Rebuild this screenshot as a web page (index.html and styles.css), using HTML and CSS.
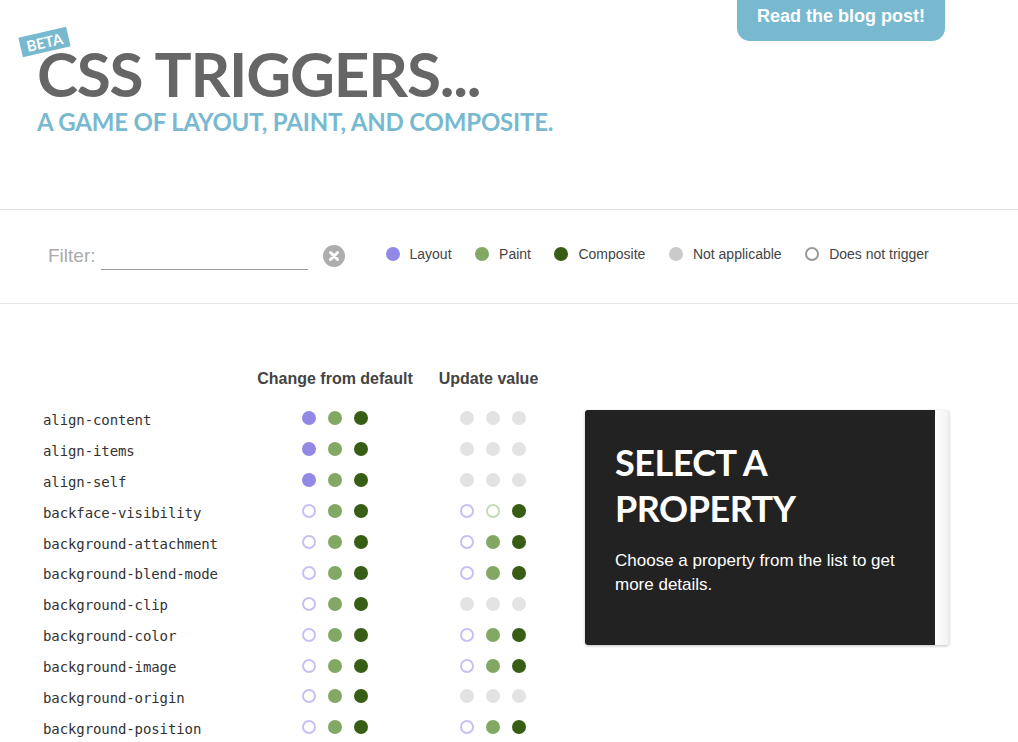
FILE: index.html
```html
<!DOCTYPE html>
<html>
<head>
<meta charset="utf-8">
<title>CSS Triggers</title>
<link rel="stylesheet" href="styles.css">
</head>
<body>
<header class="top">
  <div class="brand">
    <span class="beta">BETA</span>
    <h1 class="title">CSS TRIGGERS...</h1>
    <p class="subtitle">A GAME OF LAYOUT, PAINT, AND COMPOSITE.</p>
  </div>
  <a class="blog" href="#">Read the blog post!</a>
</header>

<section class="filterbar">
  <label class="filter-label">Filter:</label>
  <span class="filter-input"></span>
  <span class="clear">
    <svg width="22" height="22" viewBox="0 0 22 22"><circle cx="11" cy="11" r="11" fill="#adadad"/><path d="M7.5 7.5 L14.5 14.5 M14.5 7.5 L7.5 14.5" stroke="#fff" stroke-width="3" stroke-linecap="round"/></svg>
  </span>
  <ul class="legend">
    <li><span class="dot layout"></span>Layout</li>
    <li><span class="dot paint"></span>Paint</li>
    <li><span class="dot composite"></span>Composite</li>
    <li><span class="dot na"></span>Not applicable</li>
    <li><span class="dot none"></span>Does not trigger</li>
  </ul>
</section>

<main class="main">
  <div class="table">
    <div class="row head">
      <span></span>
      <span class="colhead">Change from default</span>
      <span class="colhead second">Update value</span>
    </div>
    <div class="row"><span class="name">align-content</span><span class="dots"><i class="dot layout"></i><i class="dot paint"></i><i class="dot composite"></i></span><span class="dots"><i class="dot na"></i><i class="dot na"></i><i class="dot na"></i></span></div>
    <div class="row"><span class="name">align-items</span><span class="dots"><i class="dot layout"></i><i class="dot paint"></i><i class="dot composite"></i></span><span class="dots"><i class="dot na"></i><i class="dot na"></i><i class="dot na"></i></span></div>
    <div class="row"><span class="name">align-self</span><span class="dots"><i class="dot layout"></i><i class="dot paint"></i><i class="dot composite"></i></span><span class="dots"><i class="dot na"></i><i class="dot na"></i><i class="dot na"></i></span></div>
    <div class="row"><span class="name">backface-visibility</span><span class="dots"><i class="dot layout-off"></i><i class="dot paint"></i><i class="dot composite"></i></span><span class="dots"><i class="dot layout-off"></i><i class="dot paint-off"></i><i class="dot composite"></i></span></div>
    <div class="row"><span class="name">background-attachment</span><span class="dots"><i class="dot layout-off"></i><i class="dot paint"></i><i class="dot composite"></i></span><span class="dots"><i class="dot layout-off"></i><i class="dot paint"></i><i class="dot composite"></i></span></div>
    <div class="row"><span class="name">background-blend-mode</span><span class="dots"><i class="dot layout-off"></i><i class="dot paint"></i><i class="dot composite"></i></span><span class="dots"><i class="dot layout-off"></i><i class="dot paint"></i><i class="dot composite"></i></span></div>
    <div class="row"><span class="name">background-clip</span><span class="dots"><i class="dot layout-off"></i><i class="dot paint"></i><i class="dot composite"></i></span><span class="dots"><i class="dot na"></i><i class="dot na"></i><i class="dot na"></i></span></div>
    <div class="row"><span class="name">background-color</span><span class="dots"><i class="dot layout-off"></i><i class="dot paint"></i><i class="dot composite"></i></span><span class="dots"><i class="dot layout-off"></i><i class="dot paint"></i><i class="dot composite"></i></span></div>
    <div class="row"><span class="name">background-image</span><span class="dots"><i class="dot layout-off"></i><i class="dot paint"></i><i class="dot composite"></i></span><span class="dots"><i class="dot layout-off"></i><i class="dot paint"></i><i class="dot composite"></i></span></div>
    <div class="row"><span class="name">background-origin</span><span class="dots"><i class="dot layout-off"></i><i class="dot paint"></i><i class="dot composite"></i></span><span class="dots"><i class="dot na"></i><i class="dot na"></i><i class="dot na"></i></span></div>
    <div class="row"><span class="name">background-position</span><span class="dots"><i class="dot layout-off"></i><i class="dot paint"></i><i class="dot composite"></i></span><span class="dots"><i class="dot layout-off"></i><i class="dot paint"></i><i class="dot composite"></i></span></div>
  </div>

  <aside class="panel">
    <div class="panel-body">
      <h2 class="panel-title">SELECT A PROPERTY</h2>
      <p class="panel-text">Choose a property from the list to get more details.</p>
    </div>
    <div class="panel-strip"></div>
  </aside>
</main>
</body>
</html>
```

FILE: styles.css
```css
* { box-sizing: border-box; }

html, body {
  margin: 0;
  padding: 0;
  background: #fff;
  overflow: hidden;
}

body {
  font-family: "Liberation Sans", Arial, sans-serif;
  color: #444;
  width: 1018px;
  height: 742px;
}

/* header */
.top {
  display: flex;
  align-items: flex-start;
  height: 210px;
  border-bottom: 1px solid #e3e3e3;
  padding-left: 37px;
  padding-right: 73px;
}

.brand {
  position: relative;
  margin-top: 42px;
}

.title {
  margin: 0;
  font-family: Lato, sans-serif;
  font-weight: 700;
  font-size: 62px;
  line-height: 62px;
  color: #666;
  letter-spacing: -1.2px;
}

.subtitle {
  margin: 6px 0 0;
  font-family: Lato, sans-serif;
  font-weight: 700;
  font-size: 24px;
  line-height: 24px;
  color: #78b9d0;
  letter-spacing: -0.2px;
}

.beta {
  position: absolute;
  left: -17px;
  top: -10px;
  width: 49px;
  height: 20px;
  background: #78b9d0;
  color: #fff;
  font-family: Lato, sans-serif;
  font-weight: 700;
  font-size: 15px;
  line-height: 21px;
  text-align: center;
  transform: rotate(-13deg);
  z-index: 1;
}

.blog {
  margin-left: auto;
  display: block;
  width: 208px;
  height: 41px;
  background: #78b9d0;
  border-radius: 0 0 13px 13px;
  color: #fff;
  text-decoration: none;
  font-weight: 700;
  font-size: 18px;
  line-height: 33px;
  text-align: center;
}

/* filter */
.filterbar {
  display: flex;
  align-items: center;
  height: 94px;
  border-bottom: 1px solid #e3e3e3;
  padding-left: 48px;
  padding-bottom: 6px;
}

.filter-label {
  font-size: 19px;
  color: #aaa;
  margin-top: 4px;
}

.filter-input {
  display: block;
  width: 207px;
  height: 24px;
  margin-left: 5px;
  margin-top: 8px;
  border-bottom: 1px solid #999;
}

.clear {
  display: flex;
  margin-left: 15px;
  margin-top: 4px;
}

.legend {
  display: flex;
  align-items: center;
  gap: 23.5px;
  list-style: none;
  margin: 0 0 0 41px;
  padding: 0;
  font-size: 14px;
  color: #444;
}

.legend li {
  display: flex;
  align-items: center;
  gap: 10px;
}

/* dots */
.dot {
  display: block;
  width: 14px;
  height: 14px;
  border-radius: 50%;
}
.layout { background: #9189e5; }
.paint { background: #83a864; }
.composite { background: #385e16; }
.na { background: #e3e3e3; }
.none { border: 2px solid #999; }
.layout-off { border: 2px solid #c6c1f4; }
.paint-off { border: 2px solid #c5dbb3; }

.legend .na { background: #cacaca; }

/* main */
.main {
  display: flex;
  align-items: flex-start;
  padding: 63px 0 0 43px;
}

.table {
  width: 528px;
}

.row {
  display: grid;
  grid-template-columns: 212px 156px 156px;
  column-gap: 2px;
  align-items: center;
  height: 30.9px;
}

.row.head {
  height: 24px;
  margin-bottom: 12px;
}

.colhead {
  text-align: center;
  font-weight: 700;
  font-size: 16px;
  line-height: 24px;
  color: #444;
}

.colhead.second {
  padding-right: 9px;
}

.name {
  font-family: "DejaVu Sans Mono", monospace;
  font-size: 14px;
  color: #333;
  letter-spacing: -0.1px;
  margin-top: 3px;
}

.dots {
  display: flex;
  justify-content: center;
  gap: 12px;
}

/* panel */
.panel {
  display: flex;
  margin-left: 14px;
  margin-top: 43px;
  height: 235px;
  box-shadow: 0 1px 3px rgba(0, 0, 0, 0.25);
  border-radius: 3px;
}

.panel-body {
  width: 350px;
  background: #222;
  border-radius: 3px 0 0 3px;
  padding: 29px 30px 0 30px;
}

.panel-strip {
  width: 14px;
  background: linear-gradient(to right, #fff, #f3f3f3);
  border-right: 1px solid #ececec;
}

.panel-title {
  margin: 0;
  font-family: Lato, sans-serif;
  font-weight: 700;
  font-size: 36px;
  line-height: 46px;
  color: #fff;
  letter-spacing: -0.5px;
}

.panel-text {
  margin: 18px 0 0;
  font-size: 17px;
  line-height: 24px;
  color: #fff;
}
```
